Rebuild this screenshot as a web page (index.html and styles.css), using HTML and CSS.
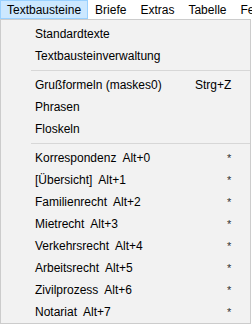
FILE: index.html
```html
<!DOCTYPE html>
<html lang="de">
<head>
  <meta charset="UTF-8">
  <title>Textbausteine</title>
  <link rel="stylesheet" href="styles.css">
</head>
<body>
  <div class="menubar">
    <div class="menu-item active">Textbausteine</div>
    <div class="menu-item">Briefe</div>
    <div class="menu-item">Extras</div>
    <div class="menu-item">Tabelle</div>
    <div class="menu-item">Fenster</div>
  </div>

  <div class="dropdown">
    <div class="entry"><span class="label">Standardtexte</span></div>
    <div class="entry"><span class="label">Textbausteinverwaltung</span></div>
    <div class="separator"></div>
    <div class="entry"><span class="label">Grußformeln (maskes0)</span><span class="shortcut">Strg+Z</span></div>
    <div class="entry"><span class="label">Phrasen</span></div>
    <div class="entry"><span class="label">Floskeln</span></div>
    <div class="separator"></div>
    <div class="entry"><span class="label">Korrespondenz&nbsp; Alt+0</span><span class="star">*</span></div>
    <div class="entry"><span class="label">[Übersicht]&nbsp; Alt+1</span><span class="star">*</span></div>
    <div class="entry"><span class="label">Familienrecht&nbsp; Alt+2</span><span class="star">*</span></div>
    <div class="entry"><span class="label">Mietrecht&nbsp; Alt+3</span><span class="star">*</span></div>
    <div class="entry"><span class="label">Verkehrsrecht&nbsp; Alt+4</span><span class="star">*</span></div>
    <div class="entry"><span class="label">Arbeitsrecht&nbsp; Alt+5</span><span class="star">*</span></div>
    <div class="entry"><span class="label">Zivilprozess&nbsp; Alt+6</span><span class="star">*</span></div>
    <div class="entry"><span class="label">Notariat&nbsp; Alt+7</span><span class="star">*</span></div>
  </div>
</body>
</html>
```

FILE: styles.css
```css
* {
  box-sizing: border-box;
  margin: 0;
  padding: 0;
}
body {
  font-family: 'Liberation Sans', Arial, sans-serif;
  font-size: 12px;
  color: #000;
  background-color: #fff;
  overflow: hidden;
  width: 252px;
  height: 325px;
}

/* Top menu bar */
.menubar {
  display: flex;
  height: 19px;
  background-color: #fff;
  white-space: nowrap;
  overflow: hidden;
}
.menu-item {
  padding: 0 6px;
  line-height: 18px;
  border: 1px solid transparent;
  flex-shrink: 0;
}
.menu-item.active {
  background-color: #cce8ff;
  border-color: #99d1ff;
}

/* Dropdown */
.dropdown {
  width: 251px;
  height: 305px;
  background-color: #f2f2f2;
  border: 1px solid #cccccc;
  padding-top: 3px;
}
.entry {
  display: flex;
  align-items: center;
  height: 22px;
  padding-left: 34px;
  white-space: nowrap;
  position: relative;
}
.shortcut {
  position: absolute;
  left: 194px;
}
.star {
  position: absolute;
  left: 226px;
  font-size: 11px;
  color: #333;
}
.separator {
  height: 7px;
  margin-left: 30px;
  border-top: 3px solid transparent;
}
.separator::after {
  content: '';
  display: block;
  height: 1px;
  background-color: #d7d7d7;
}
```
